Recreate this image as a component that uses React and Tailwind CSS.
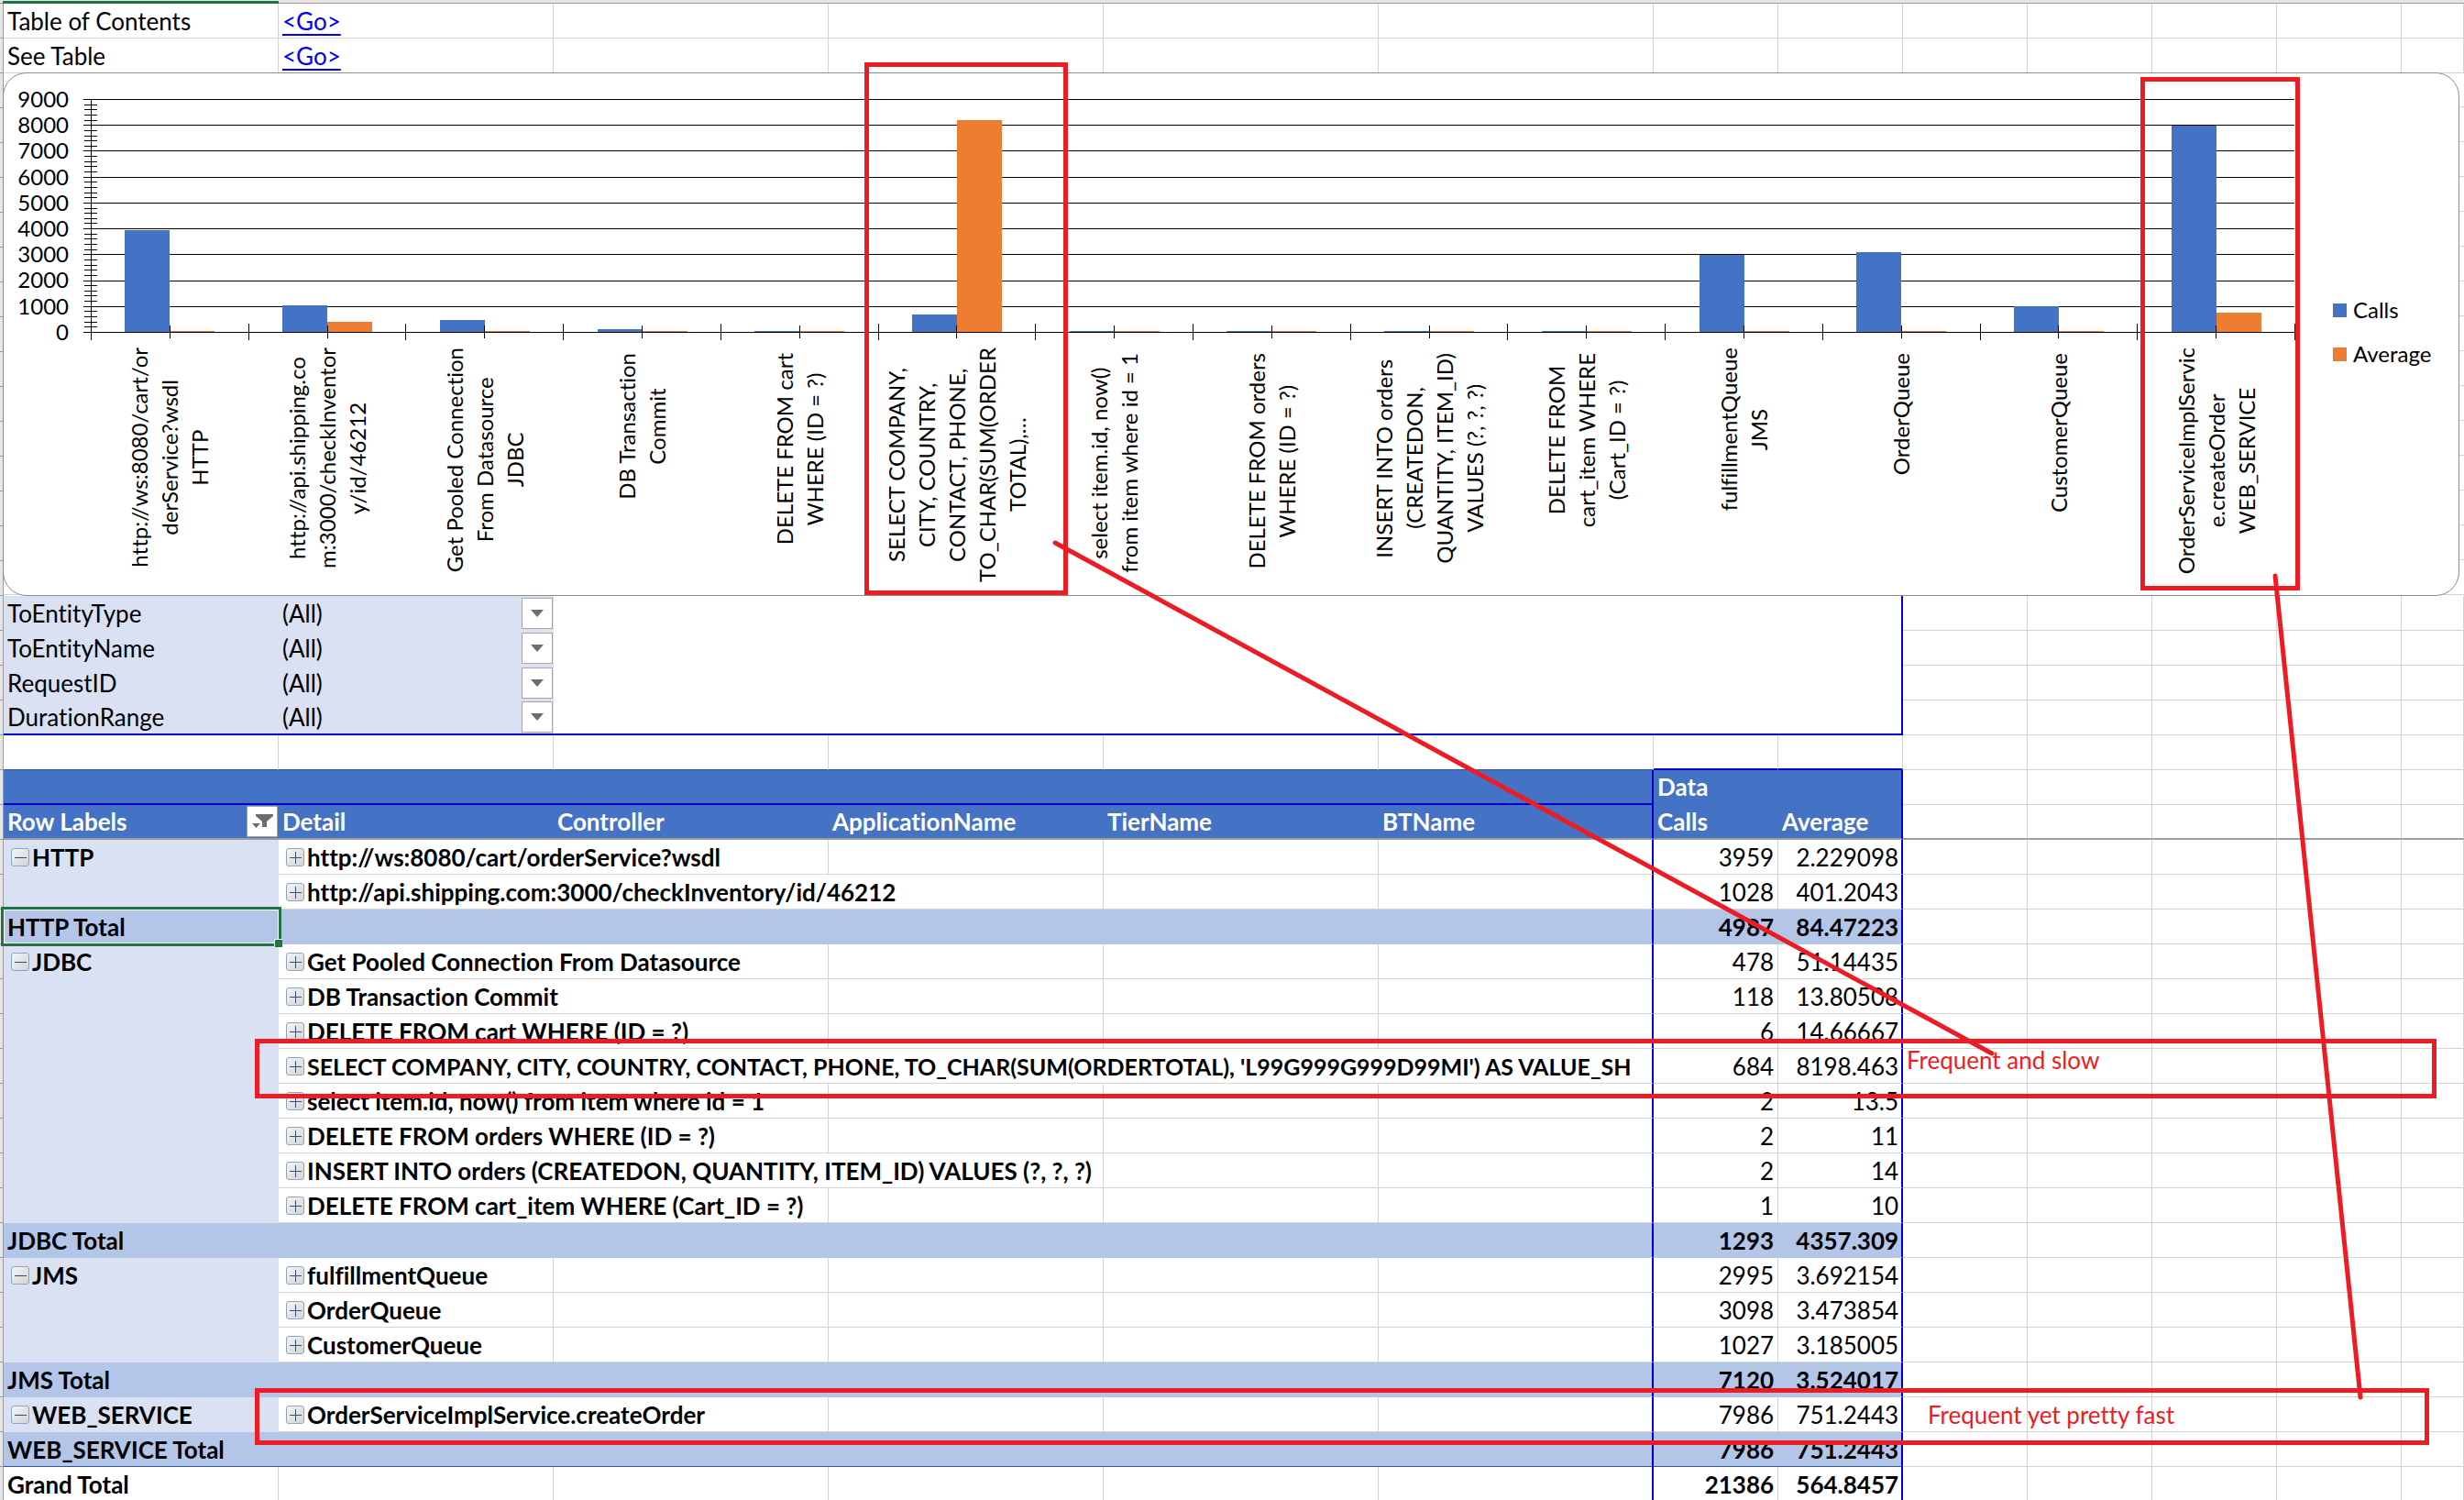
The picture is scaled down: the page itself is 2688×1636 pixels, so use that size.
import React from "react";

const calls = "#4472c4";
const average = "#ed7d31";

const categories = [
  { lines: ["http://ws:8080/cart/or", "derService?wsdl", "HTTP"], calls: 3959, avg: 2.2 },
  { lines: ["http://api.shipping.co", "m:3000/checkInventor", "y/id/46212"], calls: 1028, avg: 401 },
  { lines: ["Get Pooled Connection", "From Datasource", "JDBC"], calls: 478, avg: 51 },
  { lines: ["DB Transaction", "Commit"], calls: 118, avg: 13.8, spaced: true },
  { lines: ["DELETE FROM cart", "WHERE (ID = ?)"], calls: 6, avg: 14.7, spaced: true },
  { lines: ["SELECT COMPANY,", "CITY, COUNTRY,", "CONTACT, PHONE,", "TO_CHAR(SUM(ORDER", "TOTAL),…"], calls: 684, avg: 8198 },
  { lines: ["select item.id, now()", "from item where id = 1"], calls: 2, avg: 13.5, spaced: true },
  { lines: ["DELETE FROM orders", "WHERE (ID = ?)"], calls: 2, avg: 11, spaced: true },
  { lines: ["INSERT INTO orders", "(CREATEDON,", "QUANTITY, ITEM_ID)", "VALUES (?, ?, ?)"], calls: 2, avg: 14, spaced: true },
  { lines: ["DELETE FROM", "cart_item WHERE", "(Cart_ID = ?)"], calls: 1, avg: 10, spaced: true },
  { lines: ["fulfillmentQueue", "JMS"], calls: 2995, avg: 3.7 },
  { lines: ["OrderQueue"], calls: 3098, avg: 3.5, spaced: true },
  { lines: ["CustomerQueue"], calls: 1027, avg: 3.2, spaced: true },
  { lines: ["OrderServiceImplServic", "e.createOrder", "WEB_SERVICE"], calls: 7986, avg: 751 },
];

const rows = [
  { group: "HTTP", detail: "http://ws:8080/cart/orderService?wsdl", span: 2, calls: "3959", avg: "2.229098" },
  { detail: "http://api.shipping.com:3000/checkInventory/id/46212", span: 3, calls: "1028", avg: "401.2043" },
  { total: "HTTP Total", calls: "4987", avg: "84.47223", selected: true },
  { group: "JDBC", detail: "Get Pooled Connection From Datasource", span: 2, calls: "478", avg: "51.14435" },
  { detail: "DB Transaction Commit", span: 2, calls: "118", avg: "13.80508" },
  { detail: "DELETE FROM cart WHERE (ID = ?)", span: 2, calls: "6", avg: "14.66667" },
  { detail: "SELECT COMPANY, CITY, COUNTRY, CONTACT, PHONE, TO_CHAR(SUM(ORDERTOTAL), 'L99G999G999D99MI') AS VALUE_SH", span: 5, calls: "684", avg: "8198.463" },
  { detail: "select item.id, now() from item where id = 1", span: 2, calls: "2", avg: "13.5" },
  { detail: "DELETE FROM orders WHERE (ID = ?)", span: 2, calls: "2", avg: "11" },
  { detail: "INSERT INTO orders (CREATEDON, QUANTITY, ITEM_ID) VALUES (?, ?, ?)", span: 3, calls: "2", avg: "14" },
  { detail: "DELETE FROM cart_item WHERE (Cart_ID = ?)", span: 2, calls: "1", avg: "10" },
  { total: "JDBC Total", calls: "1293", avg: "4357.309" },
  { group: "JMS", detail: "fulfillmentQueue", span: 1, calls: "2995", avg: "3.692154" },
  { detail: "OrderQueue", span: 1, calls: "3098", avg: "3.473854" },
  { detail: "CustomerQueue", span: 1, calls: "1027", avg: "3.185005" },
  { total: "JMS Total", calls: "7120", avg: "3.524017" },
  { group: "WEB_SERVICE", detail: "OrderServiceImplService.createOrder", span: 2, calls: "7986", avg: "751.2443" },
  { total: "WEB_SERVICE Total", calls: "7986", avg: "751.2443", last: true },
];

const cell = "h-[38px] p-0 px-1 leading-8 whitespace-nowrap overflow-hidden text-left";
const grid = "border-b border-r border-[#d4d4d4]";

function Columns() {
  return (
    <colgroup>
      {[0, 1, 2, 3, 4, 5].map((i) => (
        <col key={i} className="w-[300px]" />
      ))}
      {[0, 1, 2, 3, 4, 5].map((i) => (
        <col key={i} className="w-[136px]" />
      ))}
      <col />
    </colgroup>
  );
}

function Blank({ count }) {
  return Array.from({ length: count }, (_, i) => <td key={i} className={`${cell} ${grid}`} />);
}

function Sheet({ children }) {
  return (
    <table className="w-full table-fixed border-separate border-spacing-0">
      <Columns />
      {children}
    </table>
  );
}

function Toggle({ open, label }) {
  return (
    <button
      type="button"
      aria-label={`${open ? "Collapse" : "Expand"} ${label}`}
      className="size-5 shrink-0 rounded-[3px] border border-[#8fa3c4] bg-linear-to-br from-[#f4f5f5] to-[#d3d6d4]"
    >
      <svg viewBox="0 0 18 18" className="size-full" fill="none" stroke="#3b4a78" strokeWidth="1">
        <path d="M3 9.5H16" />
        {!open && <path d="M9.5 3V16" />}
      </svg>
    </button>
  );
}

function Plot() {
  const x0 = 10.5;
  const base = 268.5;
  const step = 2404 / 14;
  const unit = 254 / 9000;
  const snap = (v) => Math.floor(v) + 0.5;
  return (
    <svg viewBox="0 0 2424 282" preserveAspectRatio="none" className="block h-[282px] w-full" role="img" aria-label="Calls and Average by detail">
      <g stroke="#000" strokeWidth="1">
        {Array.from({ length: 10 }, (_, i) => {
          const y = snap(base - i * 1000 * unit);
          return <line key={i} x1="2" x2="2414" y1={y} y2={y} />;
        })}
        {Array.from({ length: 46 }, (_, i) => {
          const y = snap(base - i * 200 * unit);
          return <line key={i} x1="3" x2="17" y1={y} y2={y} />;
        })}
      </g>
      {categories.map((c, i) => {
        const mid = Math.round(x0 + (i + 0.5) * step);
        const hc = Math.max(2, Math.ceil(c.calls * unit));
        const ha = Math.max(2, Math.ceil(c.avg * unit));
        return (
          <g key={i}>
            <rect x={mid - 49} y={269 - hc} width="49" height={hc} fill={calls} />
            <rect x={mid} y={269 - ha} width="49" height={ha} fill={average} />
          </g>
        );
      })}
      <g stroke="#000" strokeWidth="1">
        <line x1="2" x2="2414" y1={base} y2={base} />
        <line x1={x0} x2={x0} y1="14" y2="277" />
        {Array.from({ length: 29 }, (_, i) => {
          const x = snap(x0 + (i * step) / 2);
          return <line key={i} x1={x} x2={x} y1={i % 2 ? 261 : 259} y2={i % 2 ? 275 : 277} />;
        })}
      </g>
    </svg>
  );
}

function Chart() {
  return (
    <section className="bg-[repeating-linear-gradient(to_bottom,transparent_0,transparent_37px,#d4d4d4_37px,#d4d4d4_38px)]">
      <div className="relative -mt-px mr-[5px] -ml-px flex h-[571px] rounded-[26px] border border-[#8c8c8c] bg-white pt-[14px] text-2xl">
        <div className="flex h-[282px] w-[71px] shrink-0 flex-col text-right leading-7">
          {[9, 8, 7, 6, 5, 4, 3, 2, 1, 0].map((n) => (
            <span key={n} className="flex-1">{n * 1000}</span>
          ))}
        </div>
        <div className="ml-[14px] min-w-0 flex-1">
          <Plot />
          <div className="grid grid-cols-14 px-[10px] pt-[3px]">
            {categories.map((c, i) => (
              <div key={i} className={c.spaced ? "flex items-start justify-center pt-[6px]" : "flex items-start justify-center"}>
                <div className="rotate-180 text-center leading-[33px] whitespace-nowrap [writing-mode:vertical-rl]">
                  {c.lines.map((line) => (
                    <div key={line}>{line}</div>
                  ))}
                </div>
              </div>
            ))}
          </div>
        </div>
        <ul className="w-[169px] shrink-0 pt-[220px] pl-8 leading-[48px]">
          <li className="flex items-center gap-[7px]">
            <span className="size-[15px] bg-[#4472c4]" />
            Calls
          </li>
          <li className="flex items-center gap-[7px]">
            <span className="size-[15px] bg-[#ed7d31]" />
            Average
          </li>
        </ul>
      </div>
    </section>
  );
}

function Filters() {
  const names = ["ToEntityType", "ToEntityName", "RequestID", "DurationRange"];
  return (
    <tbody>
      {names.map((name, i) => {
        const line = i === 3 ? "border-b-2 border-[#0000cc]" : "";
        return (
          <tr key={name}>
            <th scope="row" className={`${cell} ${line} bg-[#d9e1f2] font-normal`}>
              <label htmlFor={name}>{name}</label>
            </th>
            <td className={`h-[38px] p-0 ${line} bg-[#d9e1f2]`}>
              <div className="relative">
                <select id={name} className="block h-9 w-full appearance-none bg-transparent pl-1 leading-8">
                  <option>(All)</option>
                </select>
                <span className="pointer-events-none absolute top-px right-px flex size-[34px] items-center justify-center border border-[#a6a6a6] bg-white">
                  <svg viewBox="0 0 14 8" className="h-2 w-[14px]" fill="#6d6d6d">
                    <path d="M0 0H14L7 8Z" />
                  </svg>
                </span>
              </div>
            </td>
            <td colSpan="6" className={`${cell} ${line} border-r-2 border-[#0000cc]`} />
            <Blank count={5} />
          </tr>
        );
      })}
      <tr>
        {Array.from({ length: 8 }, (_, i) => (
          <td key={i} className={`${cell} border-r border-r-[#d4d4d4] ${i < 6 ? "border-b border-b-[#2f5597]" : "border-b-2 border-b-[#0000cc]"}`} />
        ))}
        <Blank count={5} />
      </tr>
    </tbody>
  );
}

function PivotHead() {
  const head = `${cell} bg-[#4472c4] font-bold text-white border-b-2 border-[#9c9c9c]`;
  return (
    <thead>
      <tr>
        <td colSpan="6" className={`${cell} border-r-2 border-b-2 border-[#0000cc] bg-[#4472c4]`} />
        <th colSpan="2" className={`${cell} border-r-2 border-[#0000cc] bg-[#4472c4] pb-0.5 font-bold text-white`}>Data</th>
        <Blank count={5} />
      </tr>
      <tr>
        <th scope="col" className={`${head} pr-px`}>
          <div className="flex items-center justify-between">
            Row Labels
            <button type="button" aria-label="Filter row labels" className="size-[34px] border border-[#a6a6a6] bg-white">
              <svg viewBox="0 0 32 32" className="size-full" fill="#6d6d6d">
                <path d="M9 8H28V10L21 16V22H16V16L9 10ZM5 18H14L9.500 23Z" />
              </svg>
            </button>
          </div>
        </th>
        {["Detail", "Controller", "ApplicationName", "TierName"].map((t) => (
          <th key={t} scope="col" className={head}>{t}</th>
        ))}
        <th scope="col" className={`${head} border-r-2 border-r-[#0000cc]`}>BTName</th>
        <th scope="col" className={head}>Calls</th>
        <th scope="col" className={`${head} border-r-2 border-r-[#0000cc]`}>Average</th>
        {Array.from({ length: 5 }, (_, i) => (
          <td key={i} className={`${cell} border-r border-b-2 border-r-[#d4d4d4] border-b-[#9c9c9c]`} />
        ))}
      </tr>
    </thead>
  );
}

function TotalRow({ row }) {
  const tint = `bg-[#b4c6e7] border-b ${row.last ? "border-b-[#2f5597]" : "border-b-[#b4c6e7]"}`;
  return (
    <tr className="font-bold">
      <th scope="row" className={`h-[38px] p-0 px-1 text-left leading-8 font-bold whitespace-nowrap ${tint} ${row.selected ? "relative" : ""}`}>
        {row.total}
        {row.selected && (
          <>
            <span className="absolute -inset-x-[3px] -top-[3px] -bottom-[3px] border-3 border-[#217346]">
              <span className="block size-full border border-white" />
            </span>
            <span className="absolute -right-1 -bottom-1 size-[9px] border-t border-l border-white bg-[#217346]" />
          </>
        )}
      </th>
      <td colSpan="5" className={`${cell} ${tint} border-r-2 border-r-[#0000cc]`} />
      <td className={`h-[38px] px-[5px] text-right leading-8 ${tint}`}>{row.calls}</td>
      <td className={`h-[38px] pr-[3px] text-right leading-8 ${tint} border-r-2 border-r-[#0000cc]`}>{row.avg}</td>
      <Blank count={5} />
    </tr>
  );
}

function DetailRow({ row }) {
  return (
    <tr>
      <th scope="row" className="h-[38px] bg-[#d9e1f2] p-0 pl-2 text-left leading-8 font-bold">
        {row.group && (
          <div className="flex items-center gap-[3px]">
            <Toggle open label={row.group} />
            {row.group}
          </div>
        )}
      </th>
      <td colSpan={row.span} className={`h-[38px] overflow-hidden border-b border-[#d4d4d4] p-0 pl-2 leading-8 font-bold whitespace-nowrap ${row.span === 5 ? "border-r-2 border-r-[#0000cc] text-[25px]" : "border-r"}`}>
        <div className="flex items-center gap-[3px]">
          <Toggle label={row.detail} />
          {row.detail}
        </div>
      </td>
      {Array.from({ length: 5 - row.span }, (_, i) => (
        <td key={i} className={`${cell} border-b border-[#d4d4d4] ${i === 4 - row.span ? "border-r-2 border-r-[#0000cc]" : "border-r"}`} />
      ))}
      <td className={`h-[38px] px-1 text-right leading-8 ${grid}`}>{row.calls}</td>
      <td className="h-[38px] border-r-2 border-b border-r-[#0000cc] border-b-[#d4d4d4] pr-[3px] text-right leading-8">{row.avg}</td>
      <Blank count={5} />
    </tr>
  );
}

function Annotations() {
  return (
    <div className="pointer-events-none absolute inset-0 text-[#ed1c24]">
      <div className="absolute top-[68px] left-[943px] h-[581px] w-[222px] border-5" />
      <div className="absolute top-[84px] left-[2335px] h-[560px] w-[174px] border-5" />
      <div className="absolute top-[1133px] left-[278px] h-[65px] w-[2380px] border-5" />
      <div className="absolute top-[1514px] left-[278px] h-[62px] w-[2372px] border-5" />
      <svg width="2688" height="1600" className="absolute top-0 left-0" fill="none" stroke="#ed1c24" strokeWidth="5" strokeLinecap="round">
        <path d="M1151 592L2173 1149M2482 628L2575 1524" />
      </svg>
      <p className="absolute top-[1140px] left-[2080px] leading-8 whitespace-nowrap">Frequent and slow</p>
      <p className="absolute top-[1527px] left-[2103px] leading-8 whitespace-nowrap">Frequent yet pretty fast</p>
    </div>
  );
}

export default function App() {
  return (
    <div className="relative h-screen overflow-hidden bg-white font-['Lato',sans-serif] text-[26px] text-black [font-variant-ligatures:none]">
      <div className="flex h-1 border-b border-[#999] bg-[#e6e6e6] pl-[3px]">
        <span className="mt-px h-[3px] w-[301px] bg-[#217346]" />
      </div>
      <div className="flex">
        <div className="w-1 shrink-0 border-r border-[#999] bg-[#e6e6e6] bg-[repeating-linear-gradient(to_bottom,transparent_0,transparent_37px,#999_37px,#999_38px)]" />
        <main className="min-w-0 flex-1">
          <Sheet>
            <tbody>
              {["Table of Contents", "See Table"].map((t) => (
                <tr key={t}>
                  <td className={`${cell} ${grid}`}>{t}</td>
                  <td className={`${cell} ${grid}`}>
                    <a href="#pivot" aria-label={`Go to ${t}`} className="text-[#0000ff] underline underline-offset-4">&lt;Go&gt;</a>
                  </td>
                  <Blank count={11} />
                </tr>
              ))}
            </tbody>
          </Sheet>
          <Chart />
          <Sheet>
            <Filters />
          </Sheet>
          <div id="pivot">
            <Sheet>
              <PivotHead />
              <tbody>
                {rows.map((row, i) => (row.total ? <TotalRow key={i} row={row} /> : <DetailRow key={i} row={row} />))}
                <tr className="font-bold">
                  <th scope="row" className={`${cell} ${grid} font-bold`}>Grand Total</th>
                  <Blank count={4} />
                  <td className={`${cell} border-r-2 border-b border-r-[#0000cc] border-b-[#d4d4d4]`} />
                  <td className={`h-[38px] px-1 text-right leading-8 ${grid}`}>21386</td>
                  <td className="h-[38px] border-r-2 border-b border-r-[#0000cc] border-b-[#d4d4d4] pr-[3px] text-right leading-8">564.8457</td>
                  <Blank count={5} />
                </tr>
              </tbody>
            </Sheet>
          </div>
        </main>
      </div>
      <Annotations />
    </div>
  );
}
